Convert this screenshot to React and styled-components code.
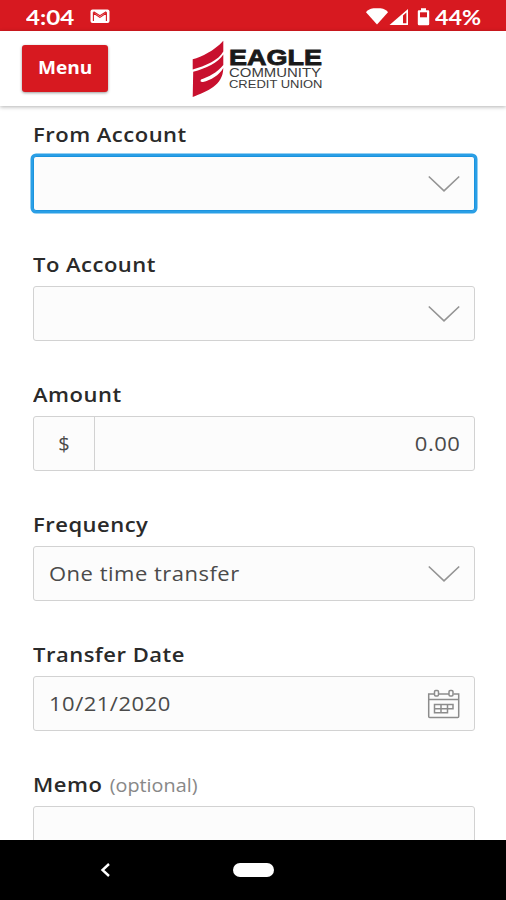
import React from 'react';
import styled, { createGlobalStyle } from 'styled-components';

const App = () => {
  return (
    <>
      <GlobalStyle />
      <Screen>
        <StatusBar>
          <StatusGroup>
            <StatusText $stretch={1.15} $width={48}>4:04</StatusText>
            <MailIcon />
          </StatusGroup>
          <StatusGroup>
            <SignalIcons />
            <StatusText $stretch={1.11} $width={47}>44%</StatusText>
          </StatusGroup>
        </StatusBar>
        <Header>
          <MenuButton><Stretch $stretch={1.06}>Menu</Stretch></MenuButton>
          <Logo />
        </Header>
        <Form>
          <Field>
            <Label><Stretch $stretch={1.1}>From Account</Stretch></Label>
            <Control $focused>
              <Value />
              <Chevron />
            </Control>
          </Field>
          <Field>
            <Label><Stretch $stretch={1.1}>To Account</Stretch></Label>
            <Control>
              <Value />
              <Chevron />
            </Control>
          </Field>
          <Field>
            <Label><Stretch $stretch={1.1}>Amount</Stretch></Label>
            <Control>
              <Prefix>$</Prefix>
              <Value $right><Stretch $stretch={1.1} $right>0.00</Stretch></Value>
            </Control>
          </Field>
          <Field>
            <Label><Stretch $stretch={1.1}>Frequency</Stretch></Label>
            <Control>
              <Value><Stretch $stretch={1.1}>One time transfer</Stretch></Value>
              <Chevron />
            </Control>
          </Field>
          <Field>
            <Label><Stretch $stretch={1.1}>Transfer Date</Stretch></Label>
            <Control>
              <Value><Stretch $stretch={1.1}>10/21/2020</Stretch></Value>
              <CalendarIcon />
            </Control>
          </Field>
          <Field>
            <Label>
              <Stretch $stretch={1.1}>Memo <Optional>(optional)</Optional></Stretch>
            </Label>
            <Control />
          </Field>
        </Form>
        <NavBar>
          <BackIcon />
          <HomePill />
        </NavBar>
      </Screen>
    </>
  );
};

const MailIcon = () => (
  <svg width="20" height="15" viewBox="0 0 20 15">
    <rect x="0.5" y="0.5" width="19" height="13.5" rx="2" fill="#fff" />
    <path d="M3.4 12V4l6.5 4.4L16.4 4v8M3.6 2.8l6.3 3.8 6.3-3.8" fill="none" stroke="#d71920" strokeWidth="1.1" />
  </svg>
);

const SignalIcons = () => (
  <svg width="64" height="20" viewBox="0 0 64 20">
    <path d="M0 5.2Q2 2 7.5 1.2h7Q20 2 22 5.2L11 17.5z" fill="#fff" />
    <path d="M23.5 18L42 2v16z" fill="#fff" />
    <path d="M37 8.4l3.4-3V16.2H37z" fill="#d71920" />
    <path d="M55 1.2h5v2h2.2q1 0 1 1V17q0 1.2-1.2 1.2h-9Q51.8 18.2 51.8 17V4.2q0-1 1-1H55z" fill="#fff" />
    <path d="M54 5.3h7v5h-7z" fill="#d71920" />
  </svg>
);

const Logo = () => (
  <svg width="134" height="62" viewBox="191 37 134 62">
    <path d="M192.7 59.3C202 56.5 214 51 223.3 40.7V51.5C219 60 205 66 192.7 69.5z" fill="#c8102e" />
    <path d="M193.2 71.7C206 68.5 218 63 223.3 54.5V65C217 73 208 77 201 79.5Q199.5 82.3 203 82C211 80 219 75.5 223.3 68C223 86 207 91 192.7 97z" fill="#c8102e" />
    <LogoName x="229" y="64.5" textLength="93" lengthAdjust="spacingAndGlyphs">EAGLE</LogoName>
    <LogoLine $size={13.5} x="229" y="77.3" textLength="92" lengthAdjust="spacingAndGlyphs">COMMUNITY</LogoLine>
    <LogoLine $size={11.5} x="229" y="88" textLength="93.5" lengthAdjust="spacingAndGlyphs">CREDIT UNION</LogoLine>
  </svg>
);

const Chevron = () => (
  <svg width="32" height="18" viewBox="0 0 32 18">
    <path d="M0.8 1.5L16 15.8 31.2 1.5" fill="none" stroke="#949494" strokeWidth="1.6" />
  </svg>
);

const CalendarIcon = () => (
  <svg width="33" height="30" viewBox="0 0 33 30" fill="none" stroke="#8c8c8c" strokeWidth="1.5">
    <path d="M7.5 5H1.7v22.5q0 1 1 1h28q1 0 1-1V5H26.5M11.5 5h10.5M1.7 10.5h30" />
    <rect x="7.5" y="1.5" width="4" height="5.5" rx="1.2" />
    <rect x="22" y="1.5" width="4" height="5.5" rx="1.2" />
    <path d="M7.5 15.5h18.5v4.3H7.5zM7.5 19.8v4h13v-8.3M14 15.5v8.3" />
  </svg>
);

const BackIcon = () => (
  <svg width="12" height="16" viewBox="0 0 12 16">
    <path d="M9 2L2.5 8l6.5 6" fill="none" stroke="#fff" strokeWidth="2.4" />
  </svg>
);

const GlobalStyle = createGlobalStyle`
  * {
    box-sizing: border-box;
  }

  body {
    margin: 0;
    font-family: "Open Sans", sans-serif;
  }

  svg {
    display: block;
    flex-shrink: 0;
  }
`;

const Screen = styled.div`
  display: flex;
  flex-direction: column;
  height: 900px;
  overflow: hidden;
  background: #fff;
`;

const StatusBar = styled.div`
  display: flex;
  flex-shrink: 0;
  align-items: center;
  justify-content: space-between;
  height: 31px;
  padding: 2px 24px 0 26px;
  background: #d71920;
`;

const StatusGroup = styled.div`
  display: flex;
  align-items: center;
  gap: 16px;

  &:last-child {
    gap: 5px;
  }
`;

const Stretch = styled.span`
  display: inline-block;
  white-space: nowrap;
  transform: scaleX(${(props) => props.$stretch});
  transform-origin: ${(props) => (props.$right ? 'right' : 'left')} center;
`;

const StatusText = styled(Stretch)`
  width: ${(props) => props.$width}px;
  color: #fff;
  font-family: Lato, sans-serif;
  font-size: 21px;
  font-weight: 700;
  line-height: 28px;
`;

const Header = styled.header`
  z-index: 1;
  display: flex;
  flex-shrink: 0;
  align-items: center;
  gap: 83px;
  height: 75px;
  padding: 0 0 1px 22px;
  background: #fff;
  box-shadow: 0 1px 4px rgba(0, 0, 0, 0.3);
`;

const MenuButton = styled.button`
  width: 86px;
  height: 47px;
  padding: 0 0 3px 16px;
  border: none;
  border-radius: 3px;
  background: #d71920;
  box-shadow: 0 1px 3px rgba(0, 0, 0, 0.4);
  color: #fff;
  font-family: inherit;
  font-size: 18px;
  font-weight: 700;
  text-align: left;
`;

const LogoName = styled.text`
  fill: #1a1a1a;
  stroke: #1a1a1a;
  stroke-width: 0.8px;
  font-family: "Liberation Sans", sans-serif;
  font-size: 22px;
  font-weight: 700;
`;

const LogoLine = styled.text`
  fill: #3c3c3c;
  font-family: "Liberation Sans", sans-serif;
  font-size: ${(props) => props.$size}px;
`;

const Form = styled.form`
  flex: 1;
  min-height: 0;
  padding: 8px 31px 0 33px;
  overflow: hidden;
`;

const Field = styled.div`
  height: 130px;
`;

const Label = styled.label`
  display: block;
  height: 42px;
  color: #2a2a2a;
  font-size: 20px;
  font-weight: 600;
  letter-spacing: 0.45px;
  line-height: 41px;
`;

const Optional = styled.span`
  margin-left: 1px;
  color: #888;
  font-size: 18px;
  font-weight: 400;
  letter-spacing: 0;
`;

const Control = styled.div`
  display: flex;
  align-items: center;
  height: 55px;
  padding-right: 14px;
  border: 1.5px solid ${(props) => (props.$focused ? '#1b93de' : '#d2d2d2')};
  border-radius: 3px;
  background: #fcfcfc;
  box-shadow: ${(props) => (props.$focused ? '0 0 0 2.5px #2a9fe6' : 'none')};
`;

const Value = styled.div`
  flex: 1;
  padding-left: 15px;
  color: #4a4a4a;
  font-size: 20px;
  letter-spacing: 0.45px;
  text-align: ${(props) => (props.$right ? 'right' : 'left')};
`;

const Prefix = styled.div`
  display: flex;
  align-items: center;
  justify-content: center;
  width: 61px;
  height: 100%;
  border-right: 1px solid #d2d2d2;
  color: #4a4a4a;
  font-size: 20px;
`;

const NavBar = styled.nav`
  display: flex;
  flex-shrink: 0;
  align-items: center;
  gap: 121px;
  height: 60px;
  padding-left: 100px;
  background: #000;
`;

const HomePill = styled.div`
  width: 41px;
  height: 14px;
  border-radius: 7px;
  background: #fff;
`;

export default App;
